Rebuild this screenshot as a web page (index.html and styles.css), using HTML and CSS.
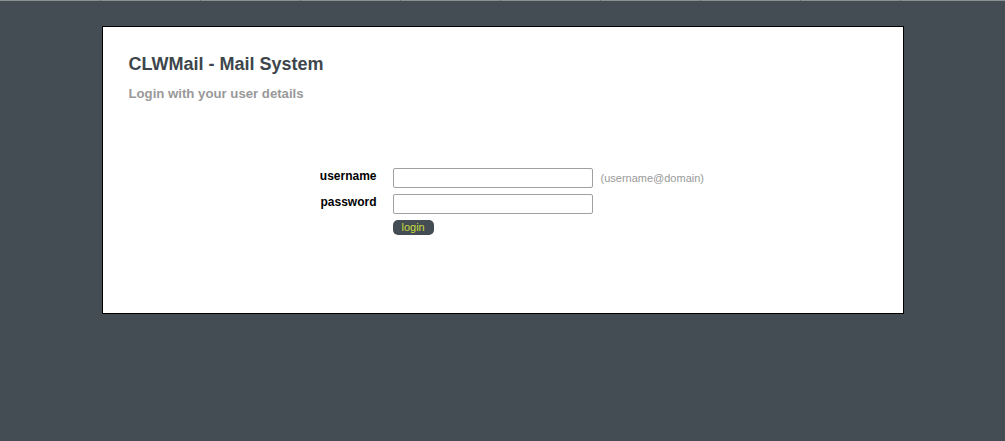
FILE: index.html
```html
<!DOCTYPE html>
<html>
<head>
<meta charset="utf-8">
<title>CLWMail - Mail System</title>
<link rel="stylesheet" href="styles.css">
</head>
<body>
<div class="topbar">
  <span class="seg"></span><span class="seg"></span><span class="seg"></span><span class="seg"></span><span class="seg"></span><span class="seg"></span><span class="seg"></span><span class="seg"></span><span class="seg"></span><span class="seg"></span>
</div>
<div class="card">
  <h1 class="title">CLWMail - Mail System</h1>
  <h2 class="subtitle">Login with your user details</h2>
  <form class="login">
    <label class="lbl" for="u">username</label>
    <input class="field" id="u" type="text">
    <span class="hint">(username@domain)</span>
    <label class="lbl" for="p">password</label>
    <input class="field" id="p" type="password">
    <span></span>
    <span></span>
    <div class="actions"><button type="button" class="btn">login</button></div>
  </form>
</div>
</body>
</html>
```
FILE: styles.css
```css
html, body {
  margin: 0;
  padding: 0;
}
body {
  background: #434d53;
  font-family: "Liberation Sans", Arial, sans-serif;
  height: 441px;
  overflow: hidden;
}
.topbar {
  display: flex;
  height: 1px;
  background: #8a8f92;
  margin-bottom: 25px;
  overflow: hidden;
}
.seg {
  flex: 0 0 100px;
  box-sizing: border-box;
  border-right: 1px solid #6b7276;
}
.seg:first-child {
  flex-basis: 101px;
}
.seg:last-child {
  flex: 1 1 auto;
  border-right: none;
}
.card {
  width: 800px;
  height: 286px;
  margin: 0 auto;
  background: #fff;
  border: 1px solid #000;
  padding: 0;
  box-sizing: content-box;
}
.title {
  margin: 0;
  padding: 26px 0 0 26px;
  font-size: 18px;
  font-weight: bold;
  color: #3d464c;
  line-height: 22px;
}
.subtitle {
  margin: 0;
  padding: 11px 0 0 26px;
  font-size: 13.2px;
  font-weight: bold;
  color: #999;
  line-height: 16px;
}
.login {
  display: grid;
  grid-template-columns: 275px 200px auto;
  column-gap: 15px;
  row-gap: 6px;
  margin-top: 66px;
  align-items: start;
}
.lbl {
  text-align: right;
  font-size: 12px;
  font-weight: bold;
  color: #000;
  line-height: 16px;
  padding-right: 1px;
}
.field {
  width: 200px;
  height: 20px;
  box-sizing: border-box;
  border: 1px solid #a0a0a0;
  border-radius: 2px;
  margin: 0;
  padding: 1px 3px;
  font-size: 12px;
  background: #fff;
}
.hint {
  font-size: 11px;
  color: #999;
  line-height: 20px;
  margin-left: -7px;
}
.actions {
  grid-column: 2;
  display: flex;
}
.btn {
  height: 15px;
  padding: 0 9px;
  border: none;
  border-radius: 5px;
  background: #434d53;
  color: #c8dc3c;
  font-family: "Liberation Sans", Arial, sans-serif;
  font-size: 11px;
  line-height: 15px;
  cursor: pointer;
}
```
